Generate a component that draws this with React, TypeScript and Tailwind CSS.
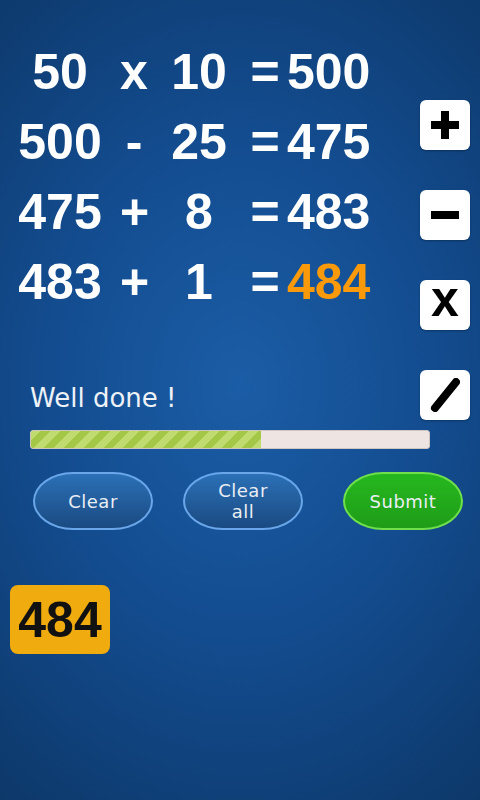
import React from 'react';

const rows = [
  { a: '50', op: 'x', b: '10', r: '500', last: false },
  { a: '500', op: '-', b: '25', r: '475', last: false },
  { a: '475', op: '+', b: '8', r: '483', last: false },
  { a: '483', op: '+', b: '1', r: '484', last: true },
];

const OpBox: React.FC<{ children: React.ReactNode }> = ({ children }) => (
  <div className="w-[50px] h-[50px] bg-white rounded-[6px] flex items-center justify-center shadow-[0_1px_2px_rgba(0,0,0,0.3)]">
    {children}
  </div>
);

const PillButton: React.FC<{ label: React.ReactNode; green?: boolean }> = ({ label, green }) => (
  <button
    className={`w-[120px] h-[58px] rounded-[40px/29px] border-2 flex flex-col items-center justify-center text-[18px] leading-[21px] tracking-[0.5px] text-[#e9eef4] ${
      green
        ? 'border-[#6fe04c] bg-[linear-gradient(#26b81f,#1f9c18)]'
        : 'border-[#69a7ea] bg-[linear-gradient(#2b70b6,#1a4a82)]'
    }`}
  >
    {label}
  </button>
);

export default function App() {
  return (
    <div className="w-[480px] h-[800px] overflow-hidden bg-[radial-gradient(ellipse_90%_70%_at_50%_48%,#1b5da6_0%,#134c8f_45%,#0c3564_100%)] font-['DejaVu_Sans',sans-serif]">
      <div className="flex">
        {/* equations + feedback */}
        <div className="w-[420px] pt-[37px]">
          {rows.map((row, i) => (
            <div
              key={i}
              className="flex h-[70px] items-center font-['Liberation_Sans',Arial,sans-serif] font-bold text-[50px] leading-[70px] text-white"
            >
              <div className="w-[120px] text-center">{row.a}</div>
              <div className="w-[28px] text-center">{row.op}</div>
              <div className="w-[102px] text-center">{row.b}</div>
              <div className="w-[30px] text-center">=</div>
              <div className={`pl-[7px] ${row.last ? 'text-[#fa9a0a]' : ''}`}>{row.r}</div>
            </div>
          ))}
          <div className="mt-[66px] pl-[30px] text-[26px] leading-[30px] text-[#eef2f7]">Well done !</div>
        </div>

        {/* operator buttons */}
        <div className="flex flex-col gap-[40px] pt-[100px]">
          <OpBox>
            <svg width="30" height="30" viewBox="0 0 30 30">
              <rect x="11" y="1" width="8" height="28" fill="#000" />
              <rect x="1" y="11" width="28" height="8" fill="#000" />
            </svg>
          </OpBox>
          <OpBox>
            <svg width="30" height="30" viewBox="0 0 30 30">
              <rect x="1" y="11" width="28" height="8" fill="#000" />
            </svg>
          </OpBox>
          <OpBox>
            <span className="font-['Liberation_Sans',Arial,sans-serif] font-bold text-[50px] leading-none text-black -mt-[12px]">x</span>
          </OpBox>
          <OpBox>
            <svg width="30" height="34" viewBox="0 0 30 34">
              <line x1="26" y1="4" x2="5" y2="30" stroke="#000" strokeWidth="8" strokeLinecap="round" />
            </svg>
          </OpBox>
        </div>
      </div>

      {/* progress */}
      <div className="ml-[30px] mt-[10px] w-[400px] h-[19px] rounded-[3px] border border-[#cfc6c2] bg-[#eee5e2] overflow-hidden">
        <div className="w-[230px] h-full bg-[repeating-linear-gradient(135deg,#c0dc70_0px,#c0dc70_7px,#a4c748_7px,#a4c748_14px)]" />
      </div>

      {/* actions */}
      <div className="flex mt-[23px] pl-[33px] gap-[30px]">
        <PillButton label="Clear" />
        <PillButton label={<><span>Clear</span><span>all</span></>} />
        <div className="ml-[10px]">
          <PillButton label="Submit" green />
        </div>
      </div>

      {/* answer badge */}
      <div className="ml-[10px] mt-[55px] w-[100px] h-[69px] rounded-[8px] bg-[#f0ab0f] flex items-center justify-center font-['Liberation_Sans',Arial,sans-serif] font-bold text-[50px] leading-none text-[#111]">
        484
      </div>
    </div>
  );
}
